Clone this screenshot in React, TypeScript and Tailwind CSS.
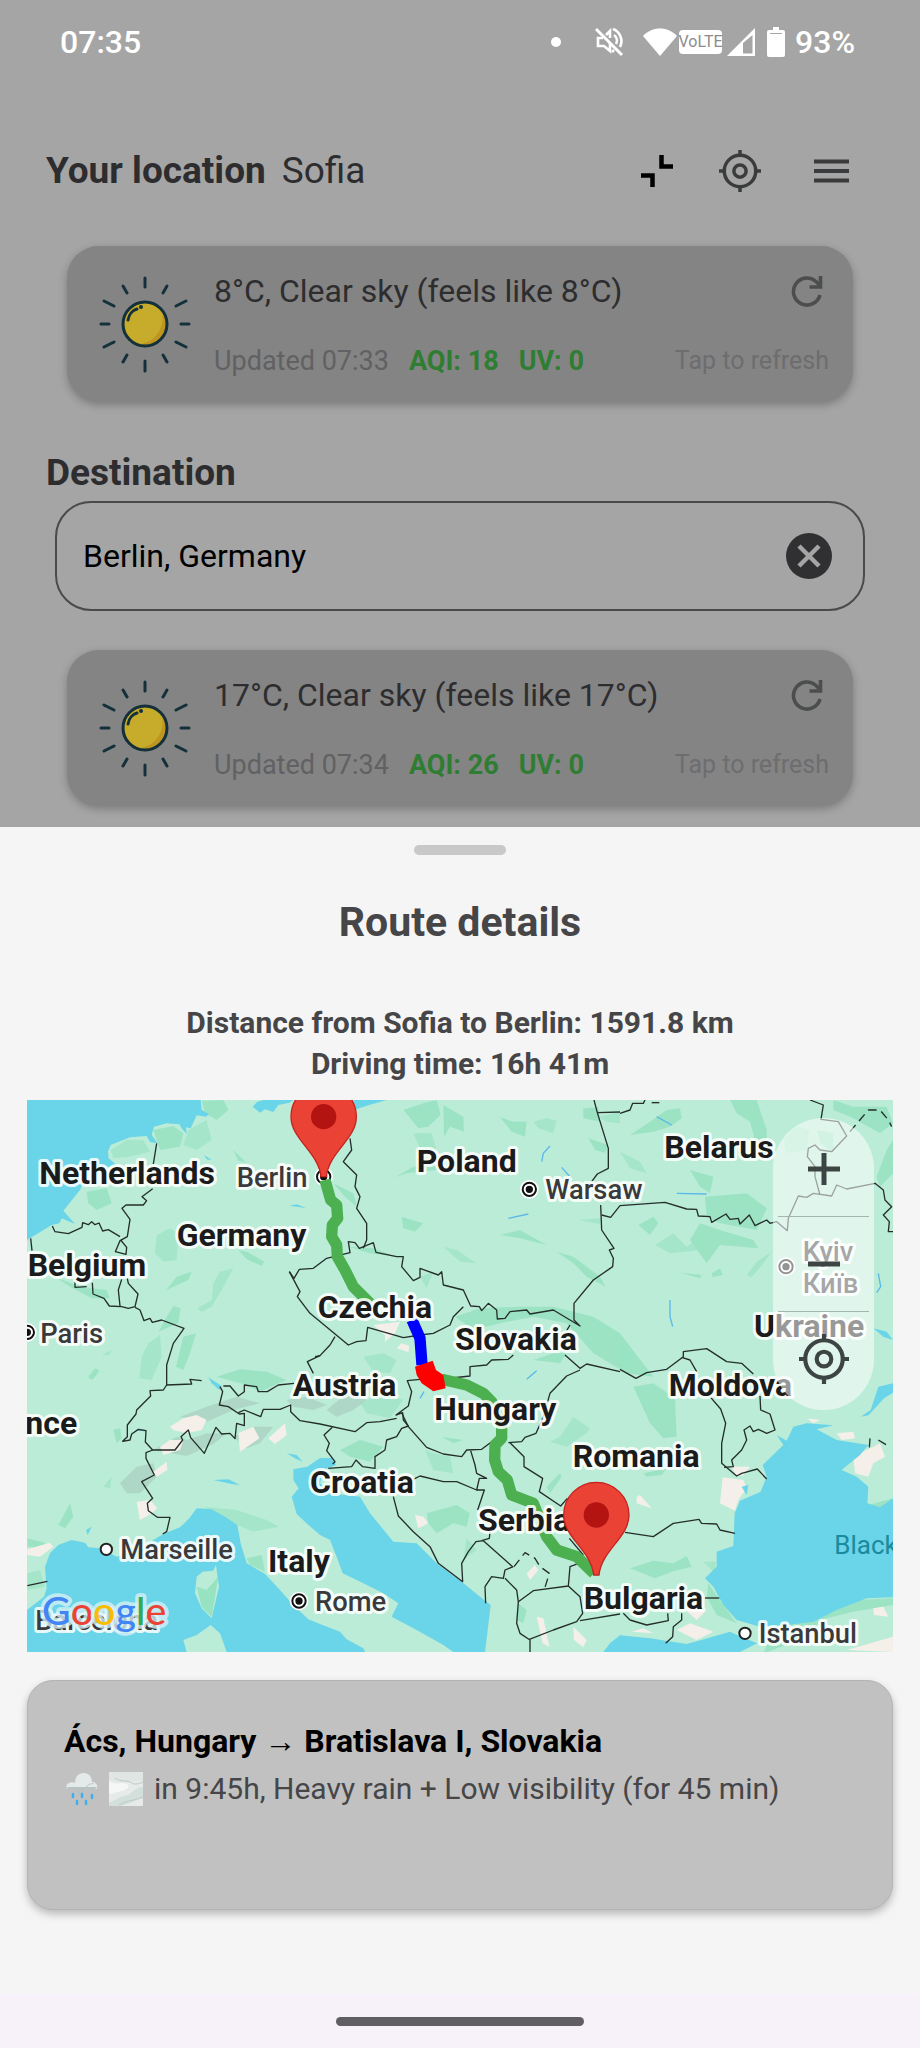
import { useState } from 'react'
import type { ReactNode } from 'react'

type Weather = {
  id: string
  summary: string
  updated: string
  aqi: number
  uv: number
}

const origin: Weather = { id: 'origin', summary: '8°C, Clear sky (feels like 8°C)', updated: '07:33', aqi: 18, uv: 0 }
const target: Weather = { id: 'target', summary: '17°C, Clear sky (feels like 17°C)', updated: '07:34', aqi: 26, uv: 0 }

function LocateIcon({ className }: { className: string }) {
  return (
    <svg viewBox="0 0 48 48" className={className} fill="none" stroke="currentColor" strokeWidth="4" aria-hidden="true">
      <circle cx="24" cy="24" r="18" />
      <circle cx="24" cy="24" r="7" />
      <path d="M24 0v6M24 42v6M0 24h6M42 24h6" />
    </svg>
  )
}

function SunIcon() {
  const rays = [
    [0, -46, 0, -37], [0, 37, 0, 47], [-44, 0, -36, 0], [36, 0, 44, 0],
    [-22, -38, -18, -31], [22, -38, 18, -31], [-22, 38, -18, 31], [22, 38, 18, 31],
    [-41, -23, -31, -18], [41, -23, 31, -18], [-41, 23, -31, 18], [41, 23, 31, 18],
  ]
  return (
    <svg viewBox="-50 -50 100 100" className="size-[100px] shrink-0" aria-hidden="true">
      <circle r="22" fill="#bf9522" />
      <path d="M-20-6A21 21 0 0 1 17-12 C20 2 12 17-4 20 A21 21 0 0 1-20-6Z" fill="#c6ac2a" />
      <circle r="22" fill="none" stroke="#14303a" strokeWidth="3" />
      <path d="M-17-4C-16-10-12-14-8-15" fill="none" stroke="#14303a" strokeWidth="3" strokeLinecap="round" />
      <circle cx="-4" cy="-17" r="2" fill="#14303a" />
      {rays.map(([x1, y1, x2, y2], i) => (
        <line key={i} x1={x1} y1={y1} x2={x2} y2={y2} stroke="#14303a" strokeWidth="3" strokeLinecap="round" />
      ))}
    </svg>
  )
}

function StatusBar() {
  return (
    <div className="flex h-[84px] items-center pl-[60px] pr-[65px] text-[32px] font-medium text-white">
      <span className="flex-1">07:35</span>
      <span className="mr-[33px] size-[10px] rounded-full bg-white" />
      <svg viewBox="0 0 30 30" className="mr-[19px] size-[30px]" fill="none" stroke="#fff" strokeWidth="2.6" aria-hidden="true">
        <path d="M2 2l26 26" strokeWidth="3" />
        <path d="M9 11H4v8h6l6 5v-8M12 8l4-4v7" />
        <path d="M19 2a13 13 0 0 1 7 18M20 8a7 7 0 0 1 2 9M20 23l-2 2" />
      </svg>
      <svg viewBox="0 0 34 28" className="h-7 w-[34px]" fill="#fff" aria-hidden="true">
        <path d="M0 8C9-2 25-2 34 8L17 28Z" />
      </svg>
      <span className="ml-[2px] flex h-6 w-[43px] items-center justify-center rounded-[4px] bg-white text-[16px] font-normal text-[#8c8c8c]">
        VoLTE
      </span>
      <svg viewBox="0 0 28 28" className="ml-[5px] size-7" aria-hidden="true">
        <path d="M0 28L28 0v28ZM16 15v10.500h9.500V7Z" fill="#fff" fillRule="evenodd" />
      </svg>
      <svg viewBox="0 0 18 30" className="ml-3 mr-[10px] h-[30px] w-[18px]" aria-hidden="true">
        <path d="M6 0h6v3h4a2 2 0 0 1 2 2v23a2 2 0 0 1-2 2H2a2 2 0 0 1-2-2V5a2 2 0 0 1 2-2h4Z" fill="#fff" />
        <path d="M3 6.500h12" stroke="#a5a5a5" />
      </svg>
      <span>93%</span>
    </div>
  )
}

function WeatherCard({ weather }: { weather: Weather }) {
  return (
    <section className="mx-[67px] flex h-[156px] items-center gap-[19px] rounded-[32px] bg-[#848484] pl-7 pr-6 shadow-[0_3px_8px_rgba(0,0,0,0.25)]">
      <SunIcon />
      <div className="flex min-w-0 flex-1 flex-col gap-[34px]">
        <div className="flex h-10 items-center justify-between text-[32px] text-[#2d2d2f]">
          <p className="whitespace-nowrap">{weather.summary}</p>
          <button type="button" aria-label="Refresh weather" className="mr-[6px] text-[#4c4e4e]">
            <svg viewBox="0 0 32 32" className="size-8" fill="none" stroke="currentColor" strokeWidth="3.600" aria-hidden="true">
              <path d="M29 20A13.500 13.500 0 1 1 25 6.500L29 10.500" />
              <path d="M29.500 1V12H18.500" />
            </svg>
          </button>
        </div>
        <div className="flex h-8 items-center whitespace-nowrap text-[27px]">
          <span className="text-[#616163]">Updated {weather.updated}</span>
          <span className="ml-5 font-bold text-[#2e7d32]">AQI: {weather.aqi}</span>
          <span className="ml-5 font-bold text-[#2e7d32]">UV: {weather.uv}</span>
          <span className="ml-auto text-[25px] text-[#6d6d6f]">Tap to refresh</span>
        </div>
      </div>
    </section>
  )
}

const water = [
  // North Sea and Baltic
  '21,30 542,30 545,60 567,72 558,80 530,76 512,115 498,112 500,132 486,116 478,103 440,100 402,110 395,134 412,160 390,156 380,138 330,142 272,165 264,185 266,205 290,225 205,245 180,300 130,362 165,402 125,385 118,400 95,405 21,450',
  '698,50 712,35 730,30 820,30 808,38 775,45 760,66 735,58 720,68',
  '1000,30 1100,30 1050,44 1008,58',
  // Mediterranean
  '75,1430 90,1390 115,1365 155,1350 195,1358 205,1372 240,1375 290,1400 350,1380 430,1332 480,1312 508,1285 530,1255 575,1258 615,1280 652,1305 662,1360 680,1420 735,1452 780,1500 815,1540 865,1588 900,1602 960,1625 980,1648 1030,1675 1035,1686 21,1686 21,1560 72,1520 80,1495',
  // Adriatic
  '820,1138 862,1130 900,1104 935,1104 948,1125 910,1140 900,1180 930,1210 1020,1220 1050,1270 1120,1355 1190,1360 1250,1420 1325,1475 1395,1532 1412,1545 1402,1630 1395,1686 1300,1686 1270,1665 1190,1620 1115,1580 1135,1540 1090,1510 1030,1480 968,1450 950,1400 930,1350 900,1335 862,1302 830,1272 815,1220 836,1195 820,1170',
  // Aegean and Marmara
  '1750,1686 1770,1660 1800,1636 1890,1645 2000,1662 2052,1648 2130,1625 2165,1642 2212,1660 2160,1686',
  // Black Sea and Azov
  '2144,1270 2160,1232 2222,1205 2240,1160 2228,1125 2290,1065 2270,1035 2300,1052 2320,1010 2360,1000 2440,1006 2390,1018 2450,1050 2545,1065 2520,1095 2465,1140 2510,1160 2545,1190 2542,1240 2580,1252 2619,1225 2619,1522 2540,1525 2450,1560 2380,1595 2300,1605 2220,1610 2150,1590 2110,1545 2080,1490 2055,1465 2090,1430 2090,1385 2140,1368',
  '2522,980 2552,960 2575,890 2619,880 2619,908 2592,925 2565,955 2545,976',
  // Lakes
  '565,862 605,888 598,900 575,880',
  '580,1170 625,1168 660,1185 635,1182',
  '800,1090 830,1095 848,1115 825,1105',
  '198,1320 215,1310 203,1335',
  '2560,715 2600,725 2619,750 2590,740',
  '808,347 830,343 858,354',
  '2165,1190 2185,1185 2180,1215',
  '552,195 575,210 560,208',
]

const islands = [
  '530,1460 548,1445 580,1442 588,1425 597,1490 575,1585 545,1555 525,1510',
  '490,1650 530,1635 572,1605 600,1630 620,1686 500,1686',
]

const forests = [
  '272,180 320,150 370,150 390,185 330,200 280,205', '400,120 460,108 490,130 480,170 420,180', '545,32 610,30 625,60 590,90 555,70', '505,120 560,90 575,150 530,180 490,165',
  '200,305 260,295 275,340 230,360 205,340', '640,180 680,218 655,212', '410,435 450,415 475,430 470,510 430,515 405,490', '655,480 680,485 733,515 725,528 680,508',
  '437,602 470,560 515,545 505,570 460,590', '532,655 575,630 580,580 600,545 640,535 605,600 575,650 545,665', '460,648 482,655 475,700 415,725 440,680', '490,740 528,730 510,790 490,840 468,830',
  '385,760 420,735 425,800 395,870 358,865 365,800', '105,560 180,590 260,600 270,625 215,625 150,590', '205,860 225,835 237,840 215,870', '245,795 275,780 268,795',
  '590,860 660,838 740,845 800,870 720,905 680,885', '115,1305 150,1240 160,1280 135,1315', '250,1190 275,1160 270,1195', '205,865 240,840 222,865', '280,1020 300,1015 305,1045 290,1060',
  '550,1250 650,1260 740,1290 778,1310 700,1325 640,1300', '550,1500 590,1480 575,1580 545,1550', '22,1345 75,1358 70,1375 22,1370', '22,1450 60,1440 75,1490 22,1500', '680,1405 725,1395 735,1445 690,1425',
  '1150,60 1215,38 1250,30 1262,75 1225,110 1195,115 1175,90', '1180,130 1235,130 1250,180 1215,210 1200,175', '1270,45 1330,80 1332,125 1290,110 1272,140', '1440,82 1480,95 1520,95 1515,140 1475,125',
  '1540,95 1580,85 1610,92 1600,130 1555,115', '1125,262 1180,230 1260,222 1250,240 1160,250', '1145,380 1210,400 1185,425 1150,415', '1270,470 1310,480 1370,520 1320,515', '1440,435 1500,420 1580,465 1500,445',
  '1610,485 1660,500 1740,560 1758,590 1700,560 1660,520', '1675,390 1740,385 1740,402', '1705,145 1765,165 1755,188 1725,180', '1690,55 1735,52 1740,95 1690,85', '1735,80 1800,66 1800,100 1760,95',
  '940,280 1000,310 1010,350 975,320', '985,470 1060,475 1130,500 1050,490', '1200,560 1240,545 1220,595', '1305,680 1380,655 1500,650 1600,650 1720,680 1800,730 1900,860 1820,850 1720,790 1640,700 1540,680 1440,700 1360,720',
  '1540,810 1600,790 1640,790 1620,820', '1030,800 1090,790 1130,810 1110,850 1060,845', '2210,30 2240,120 2240,170 2205,150 2190,95 2150,70 2130,30', '1830,135 1890,95 1940,60 1980,55 1985,85 1950,110 1900,125',
  '1800,185 1860,215 1880,250 1830,235', '2010,240 2080,260 2070,310 2040,290', '1855,405 1900,380 1915,400 1890,435', '1905,465 1960,430 2000,470 2040,440 2045,480 1950,490', '2055,320 2180,310 2240,355 2210,420 2100,400 2060,380',
  '2010,450 2040,400 2100,420 2200,450 2215,475 2100,465 2060,520', '2180,555 2210,515 2255,485 2230,520 2195,562', '1980,548 2045,555 2040,565', '2075,550 2100,535 2108,555 2078,562', '1800,760 1840,790 1840,830 1800,830',
  '2440,30 2500,50 2600,50 2619,100 2580,130 2500,85 2440,60', '2600,180 2619,150 2619,250 2580,290 2570,260', '2290,150 2330,110 2370,120 2360,180 2300,190', '2390,120 2440,130 2440,190 2400,160',
  '1840,890 1900,880 1930,900 1965,930 1970,1040 1930,1045 1890,1000', '1590,1055 1620,1040 1660,980 1710,1015 1700,1030 1640,1070', '1870,1150 1940,1135 1925,1155 1880,1160', '1580,1190 1620,1150 1625,1160 1590,1210',
  '1215,1080 1240,1140 1300,1150 1290,1100 1240,1090', '1265,1040 1330,1050 1300,1060', '1220,1270 1310,1245 1350,1270 1340,1310 1300,1300 1250,1330 1225,1300', '1340,1345 1370,1380 1330,1410',
  '1830,1435 1900,1412 1960,1420 2000,1398 2015,1430 1955,1445 1905,1465', '2250,1600 2400,1545 2500,1530 2619,1525 2619,1545 2500,1565 2400,1590 2370,1640 2230,1690 2260,1620', '2050,1415 2088,1415 2085,1450', '2065,1480 2110,1545 2150,1600 2090,1575 2060,1520',
  '960,1080 1020,1050 1090,1070 1050,1115 990,1100', '1020,940 1090,910 1150,930 1110,985 1040,970', '1495,1540 1520,1560 1510,1600 1490,1590', '2545,1245 2619,1225 2600,1252 2570,1255',
]

// bare rock and high ground
const hills = [
  '300,1180 350,1130 400,1120 410,1160 360,1210 320,1210', '400,1080 470,1040 500,1050 560,1030 620,1030 580,1062 500,1098', '480,980 560,950 650,920 720,940 640,960 550,1000',
  '640,1040 700,1010 760,1010 720,1060 680,1075', '800,930 860,920 920,945 880,960 820,950', '920,960 980,910 1040,930 1000,960 950,980',
]

const snow = [
  '450,1010 490,985 530,975 560,990 545,1020 500,1030 460,1020', '420,1070 450,1050 490,1050 480,1080 430,1095', '655,1030 700,1010 718,1045 660,1085', '745,1045 795,1000 800,1035 765,1062',
  '400,1145 440,1115 442,1140 410,1160', '350,1235 390,1230 412,1255 395,1270 360,1290', '1060,705 1140,695 1125,730 1095,755 1095,735', '1130,775 1145,760 1168,768 1165,786', '22,1378 90,1358 100,1370 60,1400 22,1395',
  '1185,1275 1210,1280 1225,1300 1195,1315', '1520,1450 1545,1425 1555,1440 1530,1470', '1550,1580 1570,1585 1588,1670 1568,1660', '1660,1610 1700,1650 1690,1672 1662,1650',
  '2108,1162 2170,1170 2180,1195 2155,1230 2145,1262 2100,1240', '2135,1130 2190,1130 2170,1155 2150,1160', '2362,985 2400,990 2380,1000', '2450,1030 2500,1025 2505,1045 2465,1050', '2500,1100 2580,1060 2595,1100 2560,1120 2545,1160 2505,1150',
  '1850,1220 1860,1215 1895,1255 1850,1240', '1970,1620 2010,1600 2080,1625 2030,1650', '2560,1555 2590,1550 2605,1580 2562,1575', '2480,1680 2619,1640 2619,1686', '1835,1625 1870,1615 1900,1630', '1990,1555 2060,1560 2030,1590',
]

const borders = [
  '410,160 400,222', '398,296 366,320 380,332 370,345 318,345 306,355 330,388 322,440 300,452 286,485 318,493 320,472 302,450', '97,408 105,425 145,431 186,412 188,398 205,404 215,395 225,404 237,399 248,423 265,419 300,440', '32,445 36,482',
  '165,575 165,592 200,590', '217,578 219,612 252,625 268,648 305,650 325,655 345,650 354,612 325,580 322,566', '305,568 295,600 300,648', '345,652 360,660 372,692 390,685 397,697 425,690 492,715 460,760 440,825 440,885 430,900 390,902 392,918 350,960 348,972 322,1005 322,1040 308,1054 330,1050 335,1032 355,1018 378,1022 376,1056 398,1080 465,1080 488,1050 483,1040 505,1020 512,1043 553,1090 588,1012 605,1032 630,1030 645,1046 650,1000 673,1007 673,970 658,972 625,950 598,945 608,905 600,890',
  '440,885 515,882 510,868 545,872', '398,1080 378,1088 378,1105 403,1155 365,1175 398,1225 382,1240 385,1262 412,1282 450,1282 440,1325 428,1332', '610,888 630,888 655,918 673,905 673,885 710,890 715,905 742,905 775,885 822,880',
  '655,968 673,960 722,980 730,958 780,958 812,945 812,965 840,992 900,1002 1005,1025 1040,998 1080,995 1130,985', '937,1012 912,1035 928,1060 920,1082 945,1115 938,1122', '925,1135 995,1130 1008,1110 1028,1130 1065,1135 1065,1100 1095,1080 1100,1050 1130,1040 1145,1015 1165,1008 1150,990 1148,968 1128,975 1165,948 1175,905 1162,872 1200,868',
  '1145,968 1165,1010 1220,1072 1270,1092 1325,1100 1340,1080 1385,1078 1422,1050', '1465,1058 1505,1055 1515,1042 1548,1030 1570,980 1590,910 1640,858 1680,840', '1470,1058 1512,1100 1512,1130 1568,1165 1558,1205 1622,1248 1642,1225', '1180,1168 1200,1158 1270,1175 1310,1175 1370,1200 1378,1165 1400,1165 1370,1150 1365,1125 1352,1082',
  '1370,1200 1393,1200 1373,1260', '1120,1220 1135,1278 1180,1325 1230,1370 1255,1420 1328,1475 1325,1420 1345,1385 1368,1355 1390,1352 1478,1430', '1397,1540 1395,1490 1415,1460 1450,1465 1455,1440 1480,1430', '1385,1352 1408,1345 1410,1325',
  '1455,1465 1490,1500 1495,1535 1490,1600 1500,1630 1530,1650 1530,1686', '1495,1535 1540,1502 1645,1488 1650,1430 1690,1415', '1645,1488 1680,1520 1688,1570 1670,1595 1600,1620 1528,1648', '1680,1592 1800,1572', '1648,1345 1690,1395', '1815,1327 1900,1340 1960,1300 2037,1288 2045,1300 2090,1302 2100,1320 2145,1330',
  '2055,1524 2098,1524', '1810,1570 1830,1590 1880,1605 1945,1592 1943,1570', '1985,1570 1985,1590 1960,1610 1958,1640 1937,1660', '2070,920 2102,957 2117,1000 2105,1060 2105,1120 2150,1158 2165,1150 2212,1137 2240,1167',
  '2112,1132 2140,1130 2135,1110 2165,1080 2180,1050 2172,1020 2190,1008 2200,1025 2215,1018 2240,1030 2265,1020 2250,972 2222,960 2220,918', '1800,838 1848,865 1880,848 1940,838 1990,800 1990,785 2060,776 2120,815 2165,820 2200,852', '1985,802 2010,810 2030,845',
  '990,145 995,180 970,215 1010,255 1005,290 1020,320 1010,355 1040,400 1040,450 1030,475', '808,545 822,565 838,538 880,535 920,505 990,488 985,455 1005,458 1018,475 1060,458 1068,487 1130,500 1150,500 1145,530 1180,572 1200,562 1200,535 1255,555 1265,545 1270,585 1330,600 1352,648 1378,650 1385,662 1405,640 1430,660 1432,687 1455,685 1470,665 1520,660 1530,672 1600,660 1650,690 1680,708 1662,690 1662,640 1720,570 1778,530 1780,505 1768,480 1782,475 1745,420 1742,345',
  '1722,30 1732,68 1765,175 1765,235 1732,252 1715,275', '1732,68 1800,66', '1745,375 1772,382 1800,347 1935,337 2000,357 2030,358 2035,378 2070,380 2075,397 2118,372 2130,388 2155,385 2160,402 2188,375 2205,407 2240,390 2250,400 2270,395 2302,422 2305,385 2335,318 2360,322 2380,310 2435,318 2450,285 2480,297 2565,280 2590,300 2595,330 2615,350 2590,375 2608,395 2605,425 2619,425',
  '808,545 840,605 832,620 870,670 985,765 1010,755 1038,752 1043,712 1150,743 1200,735 1240,730 1290,705 1300,680 1330,650', '885,800 900,797 930,765 945,740', '900,797 862,815 880,850', '1240,870 1350,858 1350,830 1400,825 1415,810 1465,808 1480,795', '1635,795 1680,835 1700,822 1800,845', '1650,705 1640,722',
  '1800,70 1830,60 1838,40 1870,40 1875,30', '1895,38 1918,38', '2370,30 2410,45 2403,88 2455,95 2480,138 2435,185 2400,180 2385,165 2365,175 2362,200 2385,230 2385,260 2400,315', '2548,1072 2550,1045', '2575,1050 2598,1064', '22,1487 82,1474',
]

const dashedBorders = ['1482,1430 1515,1388 1545,1405 1560,1430 1588,1450 1575,1492', '2490,125 2545,60 2580,60 2605,90 2615,110']

const greenRoute = [
  '915,270 932,330 950,345 953,385 937,405 935,440 950,465 952,500 975,540 1000,590 1050,640',
  '1265,868 1340,885 1390,910 1415,935 1445,1000 1445,1045 1425,1065 1424,1110 1435,1145 1462,1170 1475,1215 1540,1240 1580,1340 1610,1380 1670,1400 1722,1450',
]

const countries: [string, number, number][] = [
  ['Netherlands', 58, 282], ['Germany', 470, 467], ['Belgium', 23, 557], ['Poland', 1190, 245], ['Czechia', 893, 685], ['Slovakia', 1305, 780],
  ['Belarus', 1933, 203], ['Ukraine', 2202, 742], ['Moldova', 1946, 917], ['nce', 16, 1031], ['Austria', 818, 919], ['Hungary', 1243, 991],
  ['Croatia', 870, 1210], ['Romania', 1658, 1130], ['Serbia', 1374, 1323], ['Bulgaria', 1691, 1557], ['Italy', 744, 1445],
]

const cities: [string, number, number][] = [
  ['Berlin', 650, 290], ['Paris', 61, 758], ['Warsaw', 1576, 328], ['Kyiv', 2348, 512], ['Київ', 2348, 610],
  ['Marseille', 301, 1408], ['Rome', 885, 1563], ['Istanbul', 2216, 1660], ['Barcelona', 46, 1620],
]

const capitals = [[911, 260], [22, 727], [1528, 298], [2298, 530], [837, 1533]]
const towns = [[259, 1378], [2175, 1630]]

function Pin({ x, y }: { x: number; y: number }) {
  return (
    <g transform={`translate(${x} ${y})`}>
      <path d="M-8 0C-16-75-98-112-98-180A98 98 0 0 1 98-180C98-112 16-75 8 0Z" fill="#ea4335" stroke="#c5221f" strokeWidth="4" />
      <circle cy="-180" r="38" fill="#b31412" />
    </g>
  )
}

function RouteMap() {
  return (
    <svg viewBox="21 30 2598 1656" className="block w-full" role="img" aria-label="Route map">
      <rect x="21" y="30" width="2598" height="1656" fill="#bbecd8" />
      <g fill="#96e2c1">{forests.map((p, i) => <polygon key={i} points={p} opacity={i % 3 ? 0.85 : 0.6} />)}</g>
      <g fill="#a9cfc0" opacity="0.7">{hills.map((p, i) => <polygon key={i} points={p} />)}</g>
      <g fill="#f5efe9">{snow.map((p, i) => <polygon key={i} points={p} />)}</g>
      <g fill="#6ad4e8">{water.map((p, i) => <polygon key={i} points={p} />)}</g>
      <g fill="#bbecd8">{islands.map((p, i) => <polygon key={i} points={p} />)}</g>
      <polygon points="530,1490 560,1500 595,1460 575,1580 545,1550" fill="#96e2c1" />
      <g fill="none" stroke="#5bb9e8" strokeWidth="4">
        <path d="M1910 80L1955 105M1970 310L2060 312M1565 215L1570 190L1590 168M1625 232L1648 258M1465 385L1525 372M2575 550L2582 590L2570 608M1950 630V680L1958 710M1550 842L1520 868M355 1020L376 1022M1200 925L1212 905" />
      </g>
      <g fill="none" stroke="#252e2b" strokeWidth="4" strokeLinejoin="round">
        {borders.map((p, i) => <polyline key={i} points={p} />)}
        {dashedBorders.map((p, i) => <polyline key={i} points={p} strokeDasharray="26 16" />)}
      </g>

      <g fill="#fff" stroke="#111" strokeWidth="6">
        {capitals.map(([cx, cy]) => (
          <g key={cx}>
            <circle cx={cx} cy={cy} r="25" stroke="#fff" />
            <circle cx={cx} cy={cy} r="20" />
            <circle cx={cx} cy={cy} r="8" fill="#111" />
          </g>
        ))}
        {towns.map(([cx, cy]) => <circle key={cx} cx={cx} cy={cy} r="17" stroke="#222" />)}
      </g>

      <g fill="none" strokeLinejoin="round">
        {greenRoute.map((p, i) => <polyline key={i} points={p} stroke="#4caf50" strokeWidth="34" />)}
        <polyline points="1176,690 1200,745 1206,825" stroke="#00f" strokeWidth="34" />
        <polygon points="1185,830 1238,812 1248,840 1270,855 1277,895 1240,904 1205,880 1190,855" fill="#f00" />
      </g>

      <g strokeLinejoin="round" stroke="#fff" strokeOpacity="0.85" strokeWidth="18" style={{ paintOrder: 'stroke' }}>
        {countries.map(([name, x, y]) => (
          <text key={name} x={x} y={y} fontSize="96" fontWeight="700" fill="#1b1b1b">{name}</text>
        ))}
        {cities.map(([name, x, y]) => (
          <text key={name} x={x} y={y} fontSize="82" fontWeight="500" fill="#3a3a3c">{name}</text>
        ))}
      </g>
      <text x="2443" y="1393" fontSize="78" fill="#1a8a9e">Black</text>

      <Pin x={911} y={260} />
      <Pin x={1729} y={1455} />

      <text
        x="66" y="1606" fontSize="118" fontWeight="500" fontFamily="Lato, sans-serif"
        stroke="#d8f1f6" strokeOpacity="0.8" strokeWidth="22" strokeLinejoin="round" style={{ paintOrder: 'stroke' }}
      >
        <tspan fill="#4285f4">G</tspan>
        <tspan fill="#ea4335">o</tspan>
        <tspan fill="#fbbc04">o</tspan>
        <tspan fill="#4285f4">g</tspan>
        <tspan fill="#34a853">l</tspan>
        <tspan fill="#ea4335">e</tspan>
      </text>
    </svg>
  )
}

function MapButton({ label, children }: { label: string; children: ReactNode }) {
  return (
    <button type="button" aria-label={label} className="flex h-[94px] items-center justify-center text-[#3c4543]">
      {children}
    </button>
  )
}

function MapControls() {
  return (
    <div className="absolute right-[19px] top-[18px] flex w-[101px] flex-col rounded-full bg-white/55 py-1">
      <MapButton label="Zoom in">
        <svg viewBox="0 0 32 32" className="size-8" stroke="currentColor" strokeWidth="5"><path d="M16 0v32M0 16h32" /></svg>
      </MapButton>
      <hr className="mx-[5px] border-[#a3b5ae]" />
      <MapButton label="Zoom out">
        <svg viewBox="0 0 32 32" className="size-8" stroke="currentColor" strokeWidth="5"><path d="M0 16h32" /></svg>
      </MapButton>
      <hr className="mx-[5px] border-[#a3b5ae]" />
      <MapButton label="Center map">
        <LocateIcon className="size-[50px]" />
      </MapButton>
    </div>
  )
}

function RainIcon() {
  return (
    <svg viewBox="0 0 34 34" className="size-[34px]" aria-hidden="true">
      <path d="M3 17a4 4 0 0 1 2-6c2-1 4-1 6 0C11 4 15 1 20 1c5 0 8 4 8 9 4 0 6 3 5 7Z" fill="#e4eae9" />
      <path d="M2 15h31a3 3 0 0 1-2 2H4Z" fill="#b6c4c2" />
      <path d="M22 15c3-3 6-4 8-3" stroke="#b6c4c2" fill="none" />
      <path d="M15 18v4M19 18v4" stroke="#9fc4d2" />
      <path d="M9 22v3M18 22v3M28 23v3M13 29v3M22 29v3" stroke="#3fb0ea" strokeWidth="2.500" strokeLinecap="round" />
    </svg>
  )
}

function FogIcon() {
  return (
    <svg viewBox="0 0 34 34" className="size-[34px]" aria-hidden="true">
      <rect width="34" height="34" rx="1" fill="#e6ebe9" />
      <path d="M0 0h34v10C24 6 14 14 0 7Z" fill="#dfe6e3" />
      <path d="M0 9c8 6 13-1 19 4 3 3-4 6-19 9Z" fill="#f5f7f6" />
      <path d="M34 15c-9 0-9 7-19 9-5 1-9 4-15 7v3h12c8-2 14-6 22-8Z" fill="#d3dfdb" />
      <path d="M6 6c6 5 14 1 18 6 4 0 7 0 10-2M10 33c8-5 15-4 24-8" stroke="#bccac6" fill="none" />
    </svg>
  )
}

export default function App() {
  const [destination, setDestination] = useState('Berlin, Germany')

  return (
    <div className="flex min-h-screen flex-col bg-[#a5a5a5] font-[Roboto,sans-serif]">
      <StatusBar />

      <main className="flex h-[743px] flex-col">
        <header className="mt-[57px] flex h-[60px] items-center pl-[46px] pr-[67px] text-[37px] text-[#2d2d2f]">
          <h1 className="font-bold">Your location</h1>
          <span className="ml-4 flex-1">Sofia</span>
          <button type="button" aria-label="Collapse" className="text-black">
            <svg viewBox="0 0 32 32" className="size-8" fill="none" stroke="currentColor" strokeWidth="4.500" aria-hidden="true">
              <path d="M20.500 0v11.500H32M0 20.500h11.500V32" />
            </svg>
          </button>
          <button type="button" aria-label="Use my location" className="ml-[46px] text-[#3a3b3c]">
            <LocateIcon className="size-[42px]" />
          </button>
          <button type="button" aria-label="Menu" className="ml-[53px] mr-1 text-[#3a3b3c]">
            <svg viewBox="0 0 35 24" className="h-6 w-[35px]" stroke="currentColor" strokeWidth="4" aria-hidden="true">
              <path d="M0 2.500h35M0 12h35M0 21.500h35" />
            </svg>
          </button>
        </header>

        <div className="mt-[45px]">
          <WeatherCard weather={origin} />
        </div>

        <label htmlFor="destination" className="ml-[46px] mt-[51px] text-[37px] font-bold leading-10 text-[#2d2d2f]">
          Destination
        </label>
        <div className="mx-[55px] mt-2 flex h-[110px] items-center rounded-[36px] border-2 border-[#4a4a4c] pl-[26px] pr-[31px]">
          <input
            id="destination"
            type="text"
            value={destination}
            onChange={(e) => setDestination(e.target.value)}
            className="min-w-0 flex-1 bg-transparent text-[32px] text-black outline-none"
          />
          <button type="button" aria-label="Clear destination" onClick={() => setDestination('')}>
            <svg viewBox="0 0 46 46" className="size-[46px]" aria-hidden="true">
              <circle cx="23" cy="23" r="23" fill="#303032" />
              <path d="M13 13l20 20M33 13L13 33" stroke="#a5a5a5" strokeWidth="4.500" />
            </svg>
          </button>
        </div>

        <div className="mt-[39px]">
          <WeatherCard weather={target} />
        </div>
      </main>

      <section className="relative flex flex-1 flex-col bg-[#f5f5f5] px-[27px] text-[#464648]">
        <div className="mx-auto mt-[18px] h-[10px] w-[92px] rounded-full bg-[#c8c8c8]" />
        <h2 className="mt-[43px] text-center text-[41px] font-bold leading-[48px]">Route details</h2>
        <p className="mt-[56px] text-center text-[30px] font-bold leading-[41px]">
          Distance from Sofia to Berlin: 1591.8 km
          <br />
          Driving time: 16h 41m
        </p>

        <div className="relative mt-4 overflow-hidden">
          <RouteMap />
          <MapControls />
        </div>

        <article className="mb-[84px] mt-7 h-[230px] rounded-[26px] border border-[#b4b4b4] bg-[#c1c1c1] px-9 pt-9 shadow-[0_4px_8px_rgba(0,0,0,0.25)]">
          <h3 className="text-[32px] font-bold leading-[48px] text-black">Ács, Hungary → Bratislava I, Slovakia</h3>
          <p className="flex items-center gap-[11px] text-[30px] leading-[48px]">
            <RainIcon />
            <FogIcon />
            <span>in 9:45h, Heavy rain + Low visibility (for 45 min)</span>
          </p>
        </article>
      </section>

      <footer className="flex h-[54px] items-center justify-center bg-[#f7f2fa]">
        <div className="h-[9px] w-[248px] rounded-full bg-[#605e62]" />
      </footer>
    </div>
  )
}
